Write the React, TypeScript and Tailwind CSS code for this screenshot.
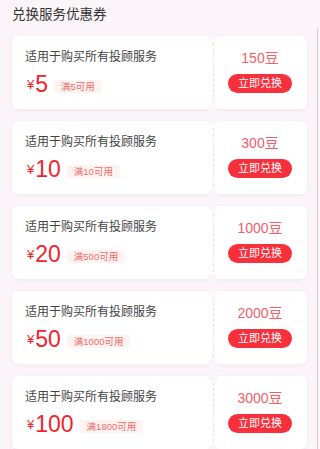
import React from "react";

const coupons = [
  { amount: "5", cond: "满5可用", beans: "150豆" },
  { amount: "10", cond: "满10可用", beans: "300豆" },
  { amount: "20", cond: "满500可用", beans: "1000豆" },
  { amount: "50", cond: "满1000可用", beans: "2000豆" },
  { amount: "100", cond: "满1800可用", beans: "3000豆" },
];

function Coupon({ amount, cond, beans }: { amount: string; cond: string; beans: string }) {
  return (
    <div className="relative flex h-[73px] shrink-0 rounded-[6px] bg-white shadow-[0_1px_4px_rgba(220,200,215,0.35)]">
      <div className="flex w-[201px] flex-col pl-[13px] pt-[13px]">
        <div className="text-[12px] leading-[16px] text-[#444]">适用于购买所有投顾服务</div>
        <div className="mt-[6px] flex items-end">
          <span className="mb-[6px] ml-[2px] text-[13px] leading-none text-[#f5222d]">¥</span>
          <span className="ml-[1px] text-[23px] leading-[26px] text-[#f5222d]">{amount}</span>
          <span className="mb-[4px] ml-[6px] rounded-[2px] bg-[#fff3f1] px-[7px] text-[9.5px] leading-[13px] text-[#f26b6b]">
            {cond}
          </span>
        </div>
      </div>
      <div className="relative w-0">
        <div className="absolute left-[-5px] top-[-5px] h-[10px] w-[10px] rounded-full bg-[#fbf5f9]" />
        <div className="absolute bottom-[-5px] left-[-5px] h-[10px] w-[10px] rounded-full bg-[#fbf5f9]" />
        <div className="absolute bottom-[7px] left-0 top-[7px] border-l border-dashed border-[#e4e0e4]" />
      </div>
      <div className="flex flex-1 flex-col items-center pt-[13px]">
        <div className="text-[14px] leading-[18px] text-[#f2606a]">{beans}</div>
        <div className="mt-[7px] flex h-[19px] w-[64px] items-center justify-center rounded-full bg-[#f7303c] text-[11px] text-white">
          立即兑换
        </div>
      </div>
    </div>
  );
}

export default function App() {
  return (
    <div
      className="relative h-[449px] w-[320px] overflow-hidden bg-[#fbf5f9]"
      style={{ fontFamily: '"Liberation Sans", "Noto Sans CJK SC", sans-serif' }}
    >
      <div className="px-[12px] pt-[5px] text-[13.5px] leading-[20px] text-[#333]">兑换服务优惠券</div>
      <div className="flex flex-col gap-[12px] px-[12px] pr-[13px] pt-[11px]">
        {coupons.map((c) => (
          <Coupon key={c.amount} {...c} />
        ))}
      </div>
      <div className="absolute bottom-0 right-[2px] top-[28px] w-[1px] bg-[#cfcdd3]" />
    </div>
  );
}
